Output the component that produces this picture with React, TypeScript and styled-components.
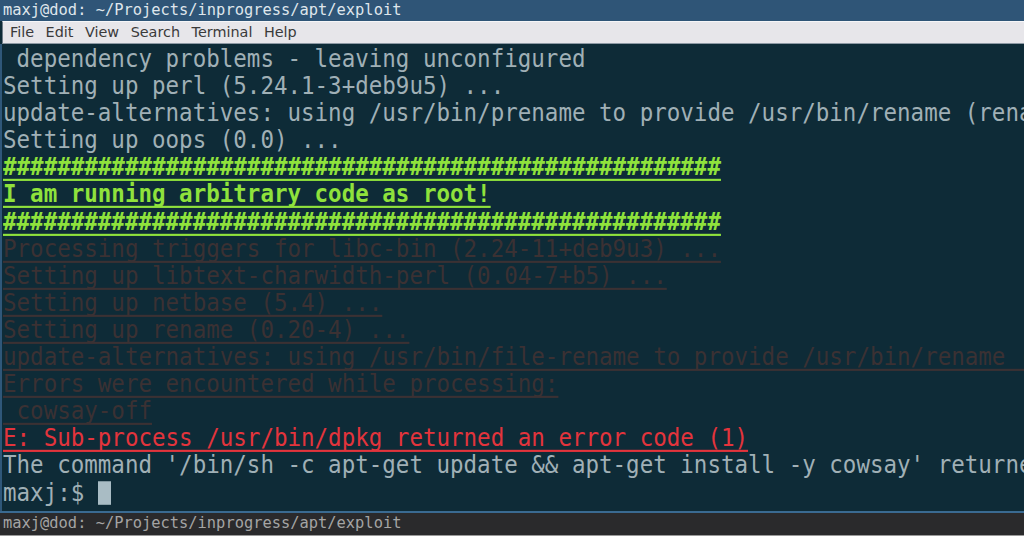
import React from "react";
import styled, { createGlobalStyle } from "styled-components";

const Global = createGlobalStyle`
  html, body { margin: 0; padding: 0; background: #0e2b37; overflow: hidden; }
  #root { width: 1024px; height: 536px; }
`;

const Window = styled.div`
  width: 1024px;
  height: 536px;
  display: flex;
  flex-direction: column;
  background: #0e2b37;
  overflow: hidden;
`;

const TitleBar = styled.div`
  height: 21px;
  flex: none;
  background: #2f5577;
  color: #dfe6ec;
  font-family: "DejaVu Sans Mono", monospace;
  font-size: 15.4px;
  line-height: 21px;
  padding-left: 3px;
  white-space: pre;
`;

const MenuBar = styled.div`
  height: 21px;
  flex: none;
  display: flex;
  align-items: center;
  gap: 11.5px;
  padding-left: 7px;
  margin-left: 2px;
  background: #e7e6ea;
  border-top: 1px solid #f6f6f8;
  border-bottom: 1px solid #8d99a4;
  border-left: 1px solid #6f7c88;
  font-family: "DejaVu Sans", sans-serif;
  font-size: 14.4px;
  color: #3a3a3a;
`;

const MenuItem = styled.span`
  line-height: 21px;
`;

const Terminal = styled.div`
  flex: 1;
  min-height: 0;
  border-left: 2px solid #2f5779;
  padding: 1px 0 0 1px;
  overflow: hidden;
  display: flex;
  flex-direction: column;
`;

type Tone = "normal" | "green" | "dim" | "red";

const toneColor: Record<Tone, string> = {
  normal: "#a0b0b6",
  green: "#8fe23c",
  dim: "#3b3133",
  red: "#e3343c",
};

const Line = styled.div<{ $tone: Tone }>`
  height: 27.1px;
  line-height: 27px;
  white-space: pre;
  font-family: "DejaVu Sans Mono", monospace;
  font-size: 22.5px;
  color: ${(p) => toneColor[p.$tone]};
  font-weight: ${(p) => (p.$tone === "green" ? 700 : 400)};
  text-decoration: ${(p) => (p.$tone === "normal" ? "none" : "underline")};
  text-decoration-thickness: 2px;
  text-underline-offset: 4px;
  text-decoration-skip-ink: none;
  transform: scaleY(1.07);
`;

const Cursor = styled.span`
  display: inline-block;
  width: 13px;
  height: 22px;
  background: #a9bcc4;
  vertical-align: -4px;
`;

const StatusBar = styled.div`
  height: 22px;
  flex: none;
  border-top: 2px solid #3a6a91;
  background: #2a2a2c;
  color: #a4a4a4;
  font-family: "DejaVu Sans Mono", monospace;
  font-size: 15.4px;
  line-height: 21px;
  padding-left: 3px;
  white-space: pre;
  border-bottom: 1px solid #9a9a9a;
`;

const lines: { tone: Tone; text: string }[] = [
  { tone: "normal", text: " dependency problems - leaving unconfigured" },
  { tone: "normal", text: "Setting up perl (5.24.1-3+deb9u5) ..." },
  { tone: "normal", text: "update-alternatives: using /usr/bin/prename to provide /usr/bin/rename (rename) in auto mode" },
  { tone: "normal", text: "Setting up oops (0.0) ..." },
  { tone: "green", text: "#".repeat(53) },
  { tone: "green", text: "I am running arbitrary code as root!" },
  { tone: "green", text: "#".repeat(53) },
  { tone: "dim", text: "Processing triggers for libc-bin (2.24-11+deb9u3) ..." },
  { tone: "dim", text: "Setting up libtext-charwidth-perl (0.04-7+b5) ..." },
  { tone: "dim", text: "Setting up netbase (5.4) ..." },
  { tone: "dim", text: "Setting up rename (0.20-4) ..." },
  { tone: "dim", text: "update-alternatives: using /usr/bin/file-rename to provide /usr/bin/rename (rename) in auto mode" },
  { tone: "dim", text: "Errors were encountered while processing:" },
  { tone: "dim", text: " cowsay-off" },
  { tone: "red", text: "E: Sub-process /usr/bin/dpkg returned an error code (1)" },
  { tone: "normal", text: "The command '/bin/sh -c apt-get update && apt-get install -y cowsay' returned a non-zero code: 100" },
];

const menu = ["File", "Edit", "View", "Search", "Terminal", "Help"];

export default function App() {
  return (
    <>
      <Global />
      <Window>
        <TitleBar>maxj@dod: ~/Projects/inprogress/apt/exploit</TitleBar>
        <MenuBar>
          {menu.map((m) => (
            <MenuItem key={m}>{m}</MenuItem>
          ))}
        </MenuBar>
        <Terminal>
          {lines.map((l, i) => (
            <Line key={i} $tone={l.tone}>
              {l.text}
            </Line>
          ))}
          <Line $tone="normal">
            {"maxj:$ "}
            <Cursor />
          </Line>
        </Terminal>
        <StatusBar>maxj@dod: ~/Projects/inprogress/apt/exploit</StatusBar>
      </Window>
    </>
  );
}
